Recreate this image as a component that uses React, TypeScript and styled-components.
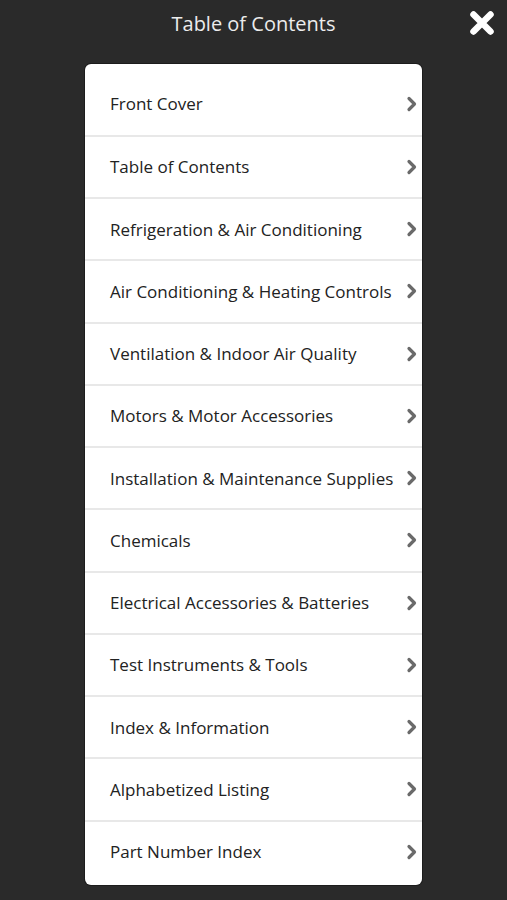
import React from 'react';
import styled, { createGlobalStyle } from 'styled-components';

const GlobalStyle = createGlobalStyle`
  html, body {
    margin: 0;
    padding: 0;
    background: #2a2a2a;
    font-family: 'Open Sans', 'Noto Sans', sans-serif;
  }
`;

const StyledPage = styled.div`
  width: 507px;
  height: 900px;
  background: #2a2a2a;
  overflow: hidden;
`;

const StyledHeader = styled.header`
  display: grid;
  grid-template-columns: 1fr auto 1fr;
  align-items: center;
  height: 46px;
  margin-bottom: 18px;

  h1 {
    grid-column: 2;
    margin: 0;
    font-size: 20px;
    font-weight: 400;
    color: #ececec;
  }
`;

const StyledClose = styled.button`
  justify-self: end;
  display: flex;
  align-items: center;
  justify-content: center;
  width: 26px;
  height: 26px;
  margin-right: 12px;
  padding: 0;
  border: 0;
  background: none;
  cursor: pointer;
`;

const StyledPanel = styled.ul`
  width: 337px;
  height: 821px;
  margin: 0 auto;
  padding: 8.5px 0 0;
  list-style: none;
  background: #fff;
  border-radius: 6px;
  box-shadow: 0 0 0 1px #1c1c1c;
  box-sizing: border-box;
`;

const StyledRow = styled.li<{ $first?: boolean }>`
  display: flex;
  align-items: center;
  justify-content: space-between;
  box-sizing: border-box;
  height: 62.25px;
  padding: 0 4px 0 25px;
  border-top: ${({ $first }) => ($first ? 'none' : '2px solid #e8e8e8')};
  font-size: 17px;
  color: #222;
  white-space: nowrap;

  svg {
    flex-shrink: 0;
  }
`;

const Chevron = () => (
  <svg width='12' height='16' viewBox='0 0 12 16'>
    <path
      d='M3 2.5 L8.5 8 L3 13.5'
      fill='none'
      stroke='#6a6a6a'
      strokeWidth='3.2'
      strokeLinecap='round'
      strokeLinejoin='round'
    />
  </svg>
);

const CloseIcon = () => (
  <svg width='26' height='26' viewBox='0 0 26 26'>
    <path
      d='M4.5 4.5 L21.5 21.5 M21.5 4.5 L4.5 21.5'
      stroke='#fff'
      strokeWidth='6.5'
      strokeLinecap='round'
    />
  </svg>
);

const chapters = [
  'Front Cover',
  'Table of Contents',
  'Refrigeration & Air Conditioning',
  'Air Conditioning & Heating Controls',
  'Ventilation & Indoor Air Quality',
  'Motors & Motor Accessories',
  'Installation & Maintenance Supplies',
  'Chemicals',
  'Electrical Accessories & Batteries',
  'Test Instruments & Tools',
  'Index & Information',
  'Alphabetized Listing',
  'Part Number Index',
];

const App = () => (
  <StyledPage>
    <GlobalStyle />
    <StyledHeader>
      <h1>Table of Contents</h1>
      <StyledClose aria-label='Close'>
        <CloseIcon />
      </StyledClose>
    </StyledHeader>

    <StyledPanel>
      {chapters.map((chapter, i) => (
        <StyledRow key={chapter} $first={i === 0}>
          <span>{chapter}</span>
          <Chevron />
        </StyledRow>
      ))}
    </StyledPanel>
  </StyledPage>
);

export default App;
